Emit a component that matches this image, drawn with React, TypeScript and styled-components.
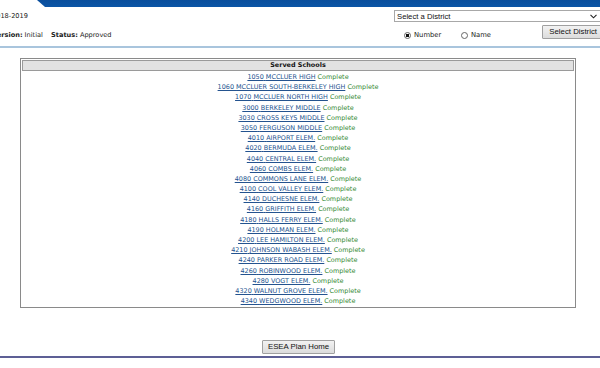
import React from 'react';
import styled, { createGlobalStyle } from 'styled-components';

const GlobalStyle = createGlobalStyle`
  html, body {
    margin: 0;
    padding: 0;
    background: #fff;
  }
  body {
    width: 600px;
    height: 368px;
    overflow: hidden;
    font-family: "DejaVu Sans", Verdana, sans-serif;
    color: #222;
  }
`;

const schools: [string, string][] = [
  ['1050', 'MCCLUER HIGH'],
  ['1060', 'MCCLUER SOUTH-BERKELEY HIGH'],
  ['1070', 'MCCLUER NORTH HIGH'],
  ['3000', 'BERKELEY MIDDLE'],
  ['3030', 'CROSS KEYS MIDDLE'],
  ['3050', 'FERGUSON MIDDLE'],
  ['4010', 'AIRPORT ELEM.'],
  ['4020', 'BERMUDA ELEM.'],
  ['4040', 'CENTRAL ELEM.'],
  ['4060', 'COMBS ELEM.'],
  ['4080', 'COMMONS LANE ELEM.'],
  ['4100', 'COOL VALLEY ELEM.'],
  ['4140', 'DUCHESNE ELEM.'],
  ['4160', 'GRIFFITH ELEM.'],
  ['4180', 'HALLS FERRY ELEM.'],
  ['4190', 'HOLMAN ELEM.'],
  ['4200', 'LEE HAMILTON ELEM.'],
  ['4210', 'JOHNSON WABASH ELEM.'],
  ['4240', 'PARKER ROAD ELEM.'],
  ['4260', 'ROBINWOOD ELEM.'],
  ['4280', 'VOGT ELEM.'],
  ['4320', 'WALNUT GROVE ELEM.'],
  ['4340', 'WEDGWOOD ELEM.'],
];

export default function App() {
  return (
    <Page>
      <GlobalStyle />
      <TopBand />
      <Header>
        <Info>
          <Year>2018-2019</Year>
          <Meta>
            <b>Version:</b> Initial <Gap /> <b>Status:</b> Approved
          </Meta>
        </Info>
        <Picker>
          <SelectBox>
            <span>Select a District</span>
            <svg width="7" height="5" viewBox="0 0 7 5">
              <path d="M0.5 0.8 L3.5 3.8 L6.5 0.8" fill="none" stroke="#222" strokeWidth="1.1" />
            </svg>
          </SelectBox>
          <PickerRow>
            <RadioLabel>
              <Radio $checked /> Number
            </RadioLabel>
            <RadioLabel>
              <Radio /> Name
            </RadioLabel>
            <GrayButton $wide>Select District</GrayButton>
          </PickerRow>
        </Picker>
      </Header>
      <Content>
        <SchoolTable>
          <TableHead>Served Schools</TableHead>
          <SchoolList>
            {schools.map(([num, name]) => (
              <SchoolRow key={num}>
                <SchoolLink href="#">
                  {num} {name}
                </SchoolLink>{' '}
                <Done>Complete</Done>
              </SchoolRow>
            ))}
          </SchoolList>
        </SchoolTable>
        <Footer>
          <GrayButton>ESEA Plan Home</GrayButton>
        </Footer>
      </Content>
      <BottomRule />
    </Page>
  );
}

const Page = styled.div`
  width: 600px;
  height: 368px;
  overflow: hidden;
`;

const TopBand = styled.div`
  height: 7px;
  margin-left: 37px;
  background: linear-gradient(#0a4e9c, #0b55a6);
  clip-path: polygon(0 0, 100% 0, 100% 100%, 8px 100%);
`;

const Header = styled.div`
  display: flex;
  justify-content: space-between;
  height: 39px;
  border-bottom: 2px solid #a9c5dd;
`;

const Info = styled.div`
  padding-top: 4px;
  margin-left: -8px;
  font-size: 6.6px;
`;

const Year = styled.div`
  line-height: 11px;
`;

const Meta = styled.div`
  margin-top: 8px;
  line-height: 11px;
  b {
    font-weight: bold;
  }
`;

const Gap = styled.span`
  display: inline-block;
  width: 4px;
`;

const Picker = styled.div`
  width: 210px;
  margin-right: -4px;
  padding-top: 3px;
  display: flex;
  flex-direction: column;
`;

const SelectBox = styled.div`
  height: 10px;
  border: 1px solid #a8a8a8;
  display: flex;
  align-items: center;
  justify-content: space-between;
  padding: 0 6px 0 2px;
  font-family: "Liberation Sans", Arial, sans-serif;
  font-size: 7.7px;
  color: #111;
`;

const PickerRow = styled.div`
  display: flex;
  align-items: center;
  margin-top: 2px;
  padding-left: 10px;
  height: 15px;
`;

const RadioLabel = styled.label`
  display: flex;
  align-items: center;
  gap: 3px;
  font-size: 6.8px;
  width: 57px;
  padding-top: 7px;
`;

const Radio = styled.span<{ $checked?: boolean }>`
  width: 5px;
  height: 5px;
  border-radius: 50%;
  border: 1px solid #666;
  background: ${(p) => (p.$checked ? 'radial-gradient(circle, #111 0 1.6px, #fff 2px)' : '#fff')};
`;

const GrayButton = styled.button<{ $wide?: boolean }>`
  height: 14px;
  padding: 0 ${(p) => (p.$wide ? '6px' : '5px')};
  margin-left: ${(p) => (p.$wide ? 'auto' : '0')};
  font-family: "Liberation Sans", Arial, sans-serif;
  font-size: 7.8px;
  color: #111;
  background: linear-gradient(#f2f2f2, #dcdcdc);
  border: 1px solid #a0a0a0;
  border-radius: 1px;
  line-height: 12px;
  cursor: pointer;
`;

const Content = styled.div`
  padding: 10px 24px 0 20px;
`;

const SchoolTable = styled.div`
  border: 1px solid #8a8a8a;
  padding: 1px;
  font-size: 6.45px;
`;

const TableHead = styled.div`
  height: 9px;
  line-height: 9px;
  border: 1px solid #9a9a9a;
  background: #e2e2e2;
  text-align: center;
  font-weight: bold;
  color: #111;
`;

const SchoolList = styled.div`
  padding-top: 1px;
`;

const SchoolRow = styled.div`
  text-align: center;
  line-height: 10.2px;
  height: 10.2px;
`;

const SchoolLink = styled.a`
  color: #24538f;
  text-decoration: underline;
`;

const Done = styled.span`
  color: #358a35;
`;

const Footer = styled.div`
  display: flex;
  justify-content: center;
  padding-top: 32px;
  padding-left: 1px;
`;

const BottomRule = styled.div`
  margin-top: 2px;
  height: 2px;
  background: #5d5f95;
`;
